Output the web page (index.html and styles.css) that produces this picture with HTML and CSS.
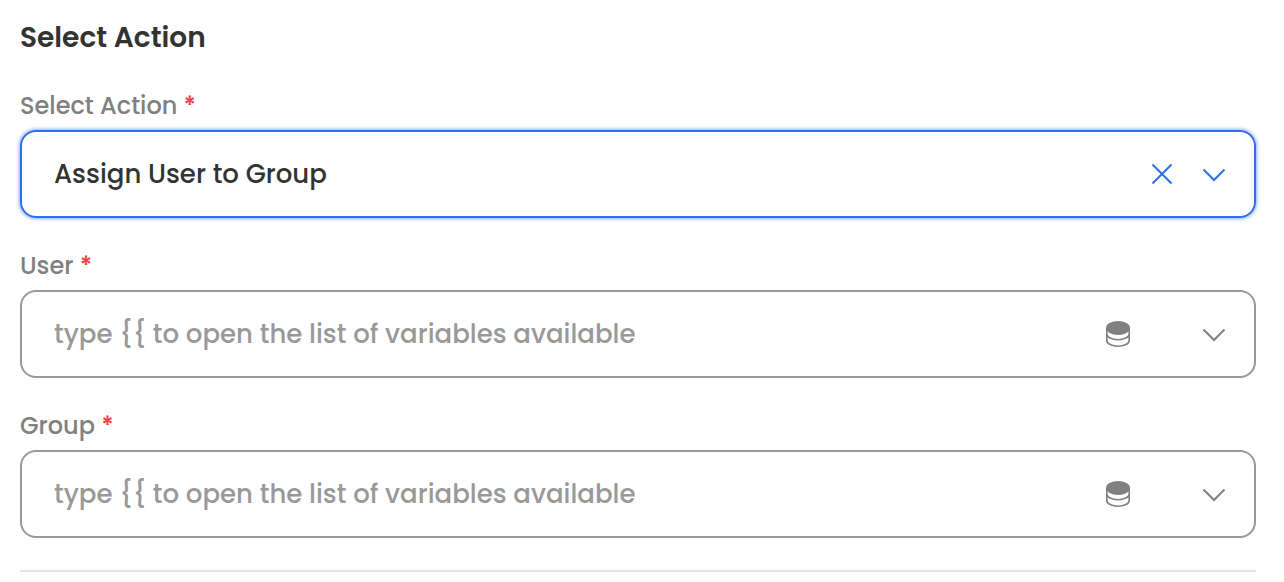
FILE: index.html
```html
<!DOCTYPE html>
<html lang="en">
<head>
<meta charset="utf-8">
<meta name="viewport" content="width=device-width, initial-scale=1">
<title>Select Action</title>
<link rel="stylesheet" href="styles.css">
</head>
<body>
<form class="panel">
  <h1 class="title">Select Action</h1>

  <div class="field">
    <label class="label" for="action">Select Action <span class="required">*</span></label>
    <div class="control control-active">
      <select class="value" id="action" required>
        <option>Assign User to Group</option>
      </select>
      <button class="icon-button" type="button" aria-label="Clear">
        <svg class="icon" viewBox="0 0 28 28"><path d="M4.500 4.500l19 19M23.500 4.500l-19 19"/></svg>
      </button>
      <button class="icon-button" type="button" aria-label="Open actions">
        <svg class="icon" viewBox="0 0 28 28"><path d="M3.500 9.500L14 20 24.500 9.500"/></svg>
      </button>
    </div>
  </div>

  <div class="field">
    <label class="label" for="user">User <span class="required">*</span></label>
    <div class="control">
      <input class="value" id="user" type="text" placeholder="type {{ to open the list of variables available" required>
      <button class="icon-button variables" type="button" aria-label="User variables">
        <svg class="icon" viewBox="0 0 28 28"><ellipse class="disk" cx="14" cy="8" rx="12" ry="7"/><path class="rim" d="M2.800 8v12.500c0 3.200 5 5.700 11.200 5.700s11.200-2.500 11.200-5.700V8M2.800 14c0 3.200 5 5.700 11.200 5.700s11.200-2.500 11.200-5.700"/></svg>
      </button>
      <button class="icon-button" type="button" aria-label="Open users">
        <svg class="icon" viewBox="0 0 28 28"><path d="M3.500 9.500L14 20 24.500 9.500"/></svg>
      </button>
    </div>
  </div>

  <div class="field">
    <label class="label" for="group">Group <span class="required">*</span></label>
    <div class="control">
      <input class="value" id="group" type="text" placeholder="type {{ to open the list of variables available" required>
      <button class="icon-button variables" type="button" aria-label="Group variables">
        <svg class="icon" viewBox="0 0 28 28"><ellipse class="disk" cx="14" cy="8" rx="12" ry="7"/><path class="rim" d="M2.800 8v12.500c0 3.200 5 5.700 11.200 5.700s11.200-2.500 11.200-5.700V8M2.800 14c0 3.200 5 5.700 11.200 5.700s11.200-2.500 11.200-5.700"/></svg>
      </button>
      <button class="icon-button" type="button" aria-label="Open groups">
        <svg class="icon" viewBox="0 0 28 28"><path d="M3.500 9.500L14 20 24.500 9.500"/></svg>
      </button>
    </div>
  </div>

  <hr class="divider">
</form>
</body>
</html>
```
FILE: styles.css
```css
* {
  box-sizing: border-box;
}

body {
  margin: 0;
  background: #fff;
  color: #333;
  font-family: Poppins, Inter, "Liberation Sans", sans-serif;
}

.panel {
  display: flex;
  flex-direction: column;
  gap: 32px;
  padding: 18px 28px 8px 20px;
}

.title {
  margin: 0;
  font-size: 28px;
  line-height: 40px;
  font-weight: 600;
}

.field {
  display: flex;
  flex-direction: column;
  gap: 8px;
}

.label {
  color: #808080;
  font-size: 24px;
  line-height: 32px;
  font-weight: 500;
}

.required {
  color: #ef4444;
  font-weight: 600;
}

.control {
  display: flex;
  align-items: center;
  gap: 24px;
  padding: 22px 26px 22px 32px;
  border: 2px solid #999;
  border-radius: 16px;
  color: #808080;
}

.control-active {
  border-color: #2f6fe8;
  box-shadow: 0 0 4px #4a84ee;
  color: #2f6fe8;
}

.value {
  flex: 1;
  min-width: 0;
  height: 40px;
  margin: 0;
  padding: 0;
  border: 0;
  outline: 0;
  appearance: none;
  background: transparent;
  color: #333;
  font-family: inherit;
  font-size: 26px;
  font-weight: 500;
  line-height: 40px;
}

.value::placeholder {
  color: #999;
  opacity: 1;
}

.icon-button {
  display: flex;
  padding: 0;
  border: 0;
  background: transparent;
  color: inherit;
  cursor: pointer;
}

.variables {
  margin-right: 44px;
}

.icon {
  width: 28px;
  height: 28px;
  fill: none;
  stroke: currentColor;
  stroke-width: 2;
}

.disk {
  fill: currentColor;
  stroke: none;
}

.rim {
  stroke-width: 1.6;
}

.divider {
  width: 100%;
  margin: 0;
  border: 0;
  border-top: 2px solid #e5e5e5;
}
```
